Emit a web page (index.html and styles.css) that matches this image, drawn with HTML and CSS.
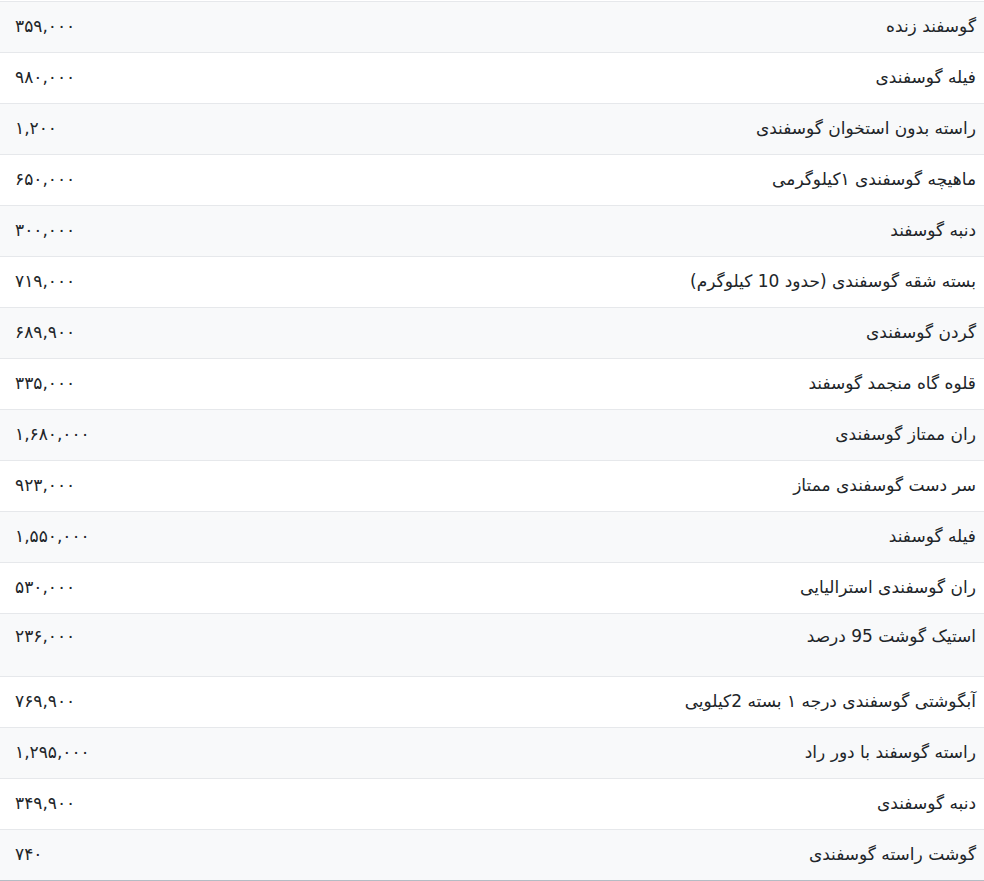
FILE: index.html
```html
<!DOCTYPE html>
<html lang="fa" dir="rtl">
<head>
<meta charset="utf-8">
<title>قیمت گوشت گوسفندی</title>
<link rel="stylesheet" href="styles.css">
</head>
<body>
<div class="price-table">
  <div class="row"><div class="name">گوسفند زنده</div><div class="price">۳۵۹,۰۰۰</div></div>
  <div class="row"><div class="name">فیله گوسفندی</div><div class="price">۹۸۰,۰۰۰</div></div>
  <div class="row"><div class="name">راسته بدون استخوان گوسفندی</div><div class="price">۱,۲۰۰</div></div>
  <div class="row"><div class="name">ماهیچه گوسفندی ۱کیلوگرمی</div><div class="price">۶۵۰,۰۰۰</div></div>
  <div class="row"><div class="name">دنبه گوسفند</div><div class="price">۳۰۰,۰۰۰</div></div>
  <div class="row"><div class="name">بسته شقه گوسفندی (حدود 10 کیلوگرم)</div><div class="price">۷۱۹,۰۰۰</div></div>
  <div class="row"><div class="name">گردن گوسفندی</div><div class="price">۶۸۹,۹۰۰</div></div>
  <div class="row"><div class="name">قلوه گاه منجمد گوسفند</div><div class="price">۳۳۵,۰۰۰</div></div>
  <div class="row"><div class="name">ران ممتاز گوسفندی</div><div class="price">۱,۶۸۰,۰۰۰</div></div>
  <div class="row"><div class="name">سر دست گوسفندی ممتاز</div><div class="price">۹۲۳,۰۰۰</div></div>
  <div class="row"><div class="name">فیله گوسفند</div><div class="price">۱,۵۵۰,۰۰۰</div></div>
  <div class="row"><div class="name">ران گوسفندی استرالیایی</div><div class="price">۵۳۰,۰۰۰</div></div>
  <div class="row tall"><div class="name">استیک گوشت 95 درصد</div><div class="price">۲۳۶,۰۰۰</div></div>
  <div class="row"><div class="name">آبگوشتی گوسفندی درجه ۱ بسته 2کیلویی</div><div class="price">۷۶۹,۹۰۰</div></div>
  <div class="row"><div class="name">راسته گوسفند با دور راد</div><div class="price">۱,۲۹۵,۰۰۰</div></div>
  <div class="row"><div class="name">دنبه گوسفندی</div><div class="price">۳۴۹,۹۰۰</div></div>
  <div class="row"><div class="name">گوشت راسته گوسفندی</div><div class="price">۷۴۰</div></div>
</div>
</body>
</html>
```
FILE: styles.css
```css
html, body {
  margin: 0;
  padding: 0;
  background: #ffffff;
}
body {
  font-family: "DejaVu Sans", "Noto Sans", sans-serif;
  font-size: 17px;
  color: #212529;
  padding-top: 1px;
}
.price-table {
  display: flex;
  flex-direction: column;
  border-bottom: 1px solid #b4bcc4;
}
.row {
  display: flex;
  align-items: center;
  justify-content: space-between;
  height: 50px;
  border-top: 1px solid #e6e8eb;
  line-height: 24px;
}
.row:nth-child(odd) {
  background: #f8f9fa;
}
.row.tall {
  box-sizing: border-box;
  height: 63px;
  align-items: flex-start;
  padding-top: 10px;
}
.name {
  padding-right: 8px;
  padding-bottom: 2px;
  text-align: right;
}
.price {
  padding-left: 15px;
  padding-bottom: 2px;
  direction: ltr;
  text-align: left;
}
```
